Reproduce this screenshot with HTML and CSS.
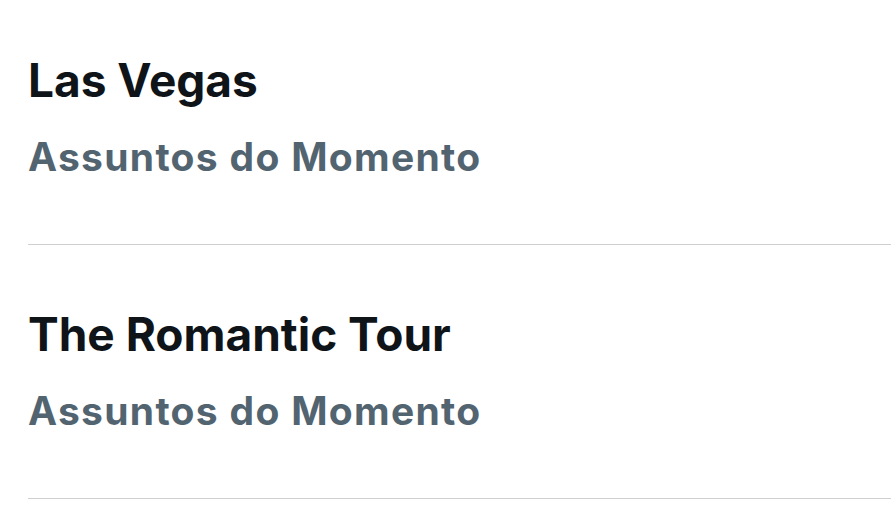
FILE: index.html
```html
<!DOCTYPE html>
<html lang="pt">
<head>
<meta charset="utf-8">
<link rel="stylesheet" href="styles.css">
</head>
<body>
<div class="feed">
  <div class="trend">
    <div class="title">Las Vegas</div>
    <div class="meta">Assuntos do Momento</div>
  </div>
  <div class="trend">
    <div class="title">The Romantic Tour</div>
    <div class="meta">Assuntos do Momento</div>
  </div>
</div>
</body>
</html>
```
FILE: styles.css
```css
html, body {
  margin: 0;
  padding: 0;
  background: #ffffff;
}
body {
  font-family: Inter, "Liberation Sans", sans-serif;
  overflow: hidden;
}
.feed {
  margin-top: -9px;
  padding-left: 28px;
}
.trend {
  display: flex;
  flex-direction: column;
  padding-top: 61px;
  box-sizing: border-box;
  height: 254px;
  border-bottom: 1px solid #cfcfcf;
}
.title {
  font-size: 46px;
  font-weight: 700;
  line-height: 56px;
  color: #0f1419;
}
.meta {
  margin-top: 27px;
  font-size: 39px;
  font-weight: 700;
  line-height: 44px;
  letter-spacing: 1.3px;
  color: #536471;
}
```
